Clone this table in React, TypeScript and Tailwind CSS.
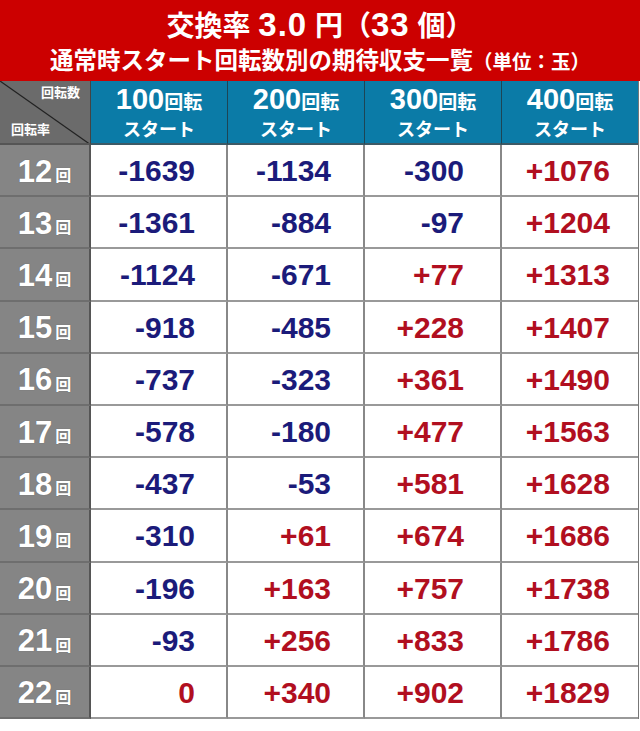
import React from "react";

const rows: { n: number; v: number[] }[] = [
  { n: 12, v: [-1639, -1134, -300, 1076] },
  { n: 13, v: [-1361, -884, -97, 1204] },
  { n: 14, v: [-1124, -671, 77, 1313] },
  { n: 15, v: [-918, -485, 228, 1407] },
  { n: 16, v: [-737, -323, 361, 1490] },
  { n: 17, v: [-578, -180, 477, 1563] },
  { n: 18, v: [-437, -53, 581, 1628] },
  { n: 19, v: [-310, 61, 674, 1686] },
  { n: 20, v: [-196, 163, 757, 1738] },
  { n: 21, v: [-93, 256, 833, 1786] },
  { n: 22, v: [0, 340, 902, 1829] },
];

const padR = ["pr-[31px]", "pr-[32px]", "pr-[36px]", "pr-[28px]"];

const fmt = (x: number) => (x > 0 ? "+" + x : String(x));

const jp = { fontFamily: '"Liberation Sans", "Noto Sans CJK JP", sans-serif' };

export default function App() {
  return (
    <div className="w-[640px] h-[731px] bg-white" style={jp}>
      <div className="h-[81px] bg-[#cc0000] flex flex-col items-center text-white font-bold">
        <div className="mt-[7px] text-[28px] leading-[36px] whitespace-nowrap">
          交換率 <span className="text-[33px] tracking-[1px]">3.0</span> 円（<span className="text-[33px] tracking-[1px]">33</span> 個）
        </div>
        <div className="mt-[1px] text-[23.5px] leading-[30px] whitespace-nowrap">
          通常時スタート回転数別の期待収支一覧<span className="text-[19.5px]">（単位：玉）</span>
        </div>
      </div>
      <div className="grid grid-cols-[91px_137px_137px_137px_136px] w-[639px] border-r border-[#777]">
        <div className="relative h-[64px] bg-[#6b6b6b] border-r border-[#444] border-b-2 border-b-[#555] overflow-hidden">
          <svg className="absolute inset-0" width="91" height="64" viewBox="0 0 91 64">
            <line x1="0" y1="0" x2="91" y2="64" stroke="#222" strokeWidth="1.2" />
          </svg>
          <span className="absolute right-[10px] top-[5px] text-[13px] font-bold text-white leading-none">回転数</span>
          <span className="absolute left-[11px] bottom-[7px] text-[13px] font-bold text-white leading-none">回転率</span>
        </div>
        {[100, 200, 300, 400].map((n, i) => (
          <div
            key={n}
            className={`h-[64px] bg-[#0b7ba7] border-b-2 border-b-[#3d5a66] ${i < 3 ? "border-r border-[#1d4555]" : ""} flex flex-col items-center justify-center text-white font-bold`}
          >
            <div className="leading-[28px] mt-[2px]">
              <span className="text-[29px]">{n}</span>
              <span className="text-[19px]">回転</span>
            </div>
            <div className="text-[18px] leading-[24px]">スタート</div>
          </div>
        ))}
        {rows.map((r) => (
          <React.Fragment key={r.n}>
            <div
              className="h-[52.2px] bg-[#858585] border-r-2 border-[#555] border-b-2 border-b-[#6e6e6e] flex items-center justify-center text-white font-bold"
              style={{ textShadow: "0 0 1px rgba(0,0,0,0.3)" }}
            >
              <span className="text-[31px] leading-none mt-[2px]">{r.n}</span>
              <span className="text-[16px] leading-none ml-[3px] mt-[12px]">回</span>
            </div>
            {r.v.map((x, ci) => (
              <div
                key={ci}
                className={`h-[52.2px] flex items-center justify-end ${padR[ci]} ${ci < 3 ? "border-r-2 border-[#888]" : ""} border-b-2 border-b-[#999] ${x >= 0 ? "text-[#b10f1f]" : "text-[#1b1b7a]"} text-[30px] font-bold`}
              >
                <span className="leading-none mt-[2px]">{fmt(x)}</span>
              </div>
            ))}
          </React.Fragment>
        ))}
      </div>
    </div>
  );
}
